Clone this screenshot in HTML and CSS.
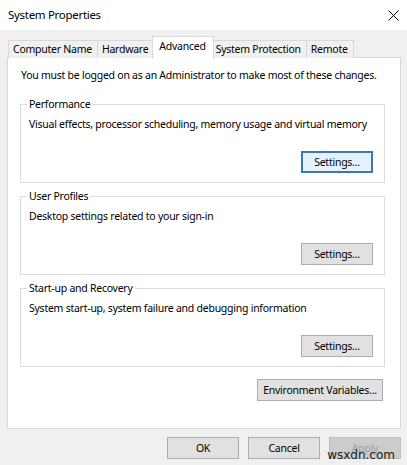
FILE: index.html
```html
<!DOCTYPE html>
<html lang="en">
<head>
<meta charset="utf-8">
<title>System Properties</title>
<link rel="stylesheet" href="styles.css">
</head>
<body>
<div class="window">
  <header class="titlebar">
    <span class="title">System Properties</span>
    <span class="close" aria-label="Close">
      <svg width="11" height="11" viewBox="0 0 11 11"><path d="M0.5 0.5 L10.5 10.5 M10.5 0.5 L0.5 10.5" stroke="#000" stroke-width="1" fill="none"/></svg>
    </span>
  </header>
  <nav class="tabs">
    <div class="tab">Computer Name</div>
    <div class="tab">Hardware</div>
    <div class="tab active">Advanced</div>
    <div class="tab">System Protection</div>
    <div class="tab">Remote</div>
  </nav>
  <section class="panel">
    <p class="notice">You must be logged on as an Administrator to make most of these changes.</p>
    <fieldset class="group">
      <legend>Performance</legend>
      <p class="desc">Visual effects, processor scheduling, memory usage and virtual memory</p>
      <div class="actions"><button class="btn focused">Settings...</button></div>
    </fieldset>
    <fieldset class="group">
      <legend>User Profiles</legend>
      <p class="desc">Desktop settings related to your sign-in</p>
      <div class="actions"><button class="btn">Settings...</button></div>
    </fieldset>
    <fieldset class="group">
      <legend>Start-up and Recovery</legend>
      <p class="desc">System start-up, system failure and debugging information</p>
      <div class="actions"><button class="btn">Settings...</button></div>
    </fieldset>
    <div class="env-row"><button class="btn wide">Environment Variables...</button></div>
  </section>
  <footer class="dialog-buttons">
    <button class="btn">OK</button>
    <button class="btn">Cancel</button>
    <button class="btn disabled">Apply</button>
  </footer>
  <span class="watermark">wsxdn.com</span>
</div>
</body>
</html>
```
FILE: styles.css
```css
* { box-sizing: border-box; }
html, body { margin: 0; padding: 0; }
body {
  width: 407px;
  height: 465px;
  overflow: hidden;
  background: #f0f0f0;
  font-family: "Noto Sans", "Open Sans", sans-serif;
  font-size: 10.5px;
  letter-spacing: -0.25px;
  color: #000;
}
.window { position: relative; width: 407px; height: 465px; }
.titlebar {
  height: 30px;
  background: #fff;
  display: flex;
  align-items: center;
  justify-content: space-between;
  padding: 0 8px 0 8px;
}
.title { font-size: 11.5px; letter-spacing: -0.3px; line-height: 16px; }
.close { display: flex; width: 11px; height: 11px; }
.tabs {
  display: flex;
  align-items: flex-end;
  height: 28px;
  padding-left: 8px;
}
.tab {
  height: 18px;
  padding: 0 5px 0 4px;
  display: flex;
  align-items: center;
  border: 1px solid #d9d9d9;
  border-bottom: none;
  background: #f0f0f0;
  line-height: 15px;
  white-space: nowrap;
}
.tab + .tab { margin-left: -1px; }
.tab.active {
  position: relative;
  z-index: 1;
  height: 23px;
  margin: 0 -2px -1px -2px;
  padding: 0 7px 3px 6px;
  background: #fff;
}
.panel {
  margin: -1px 6px 0 7px;
  border: 1px solid #d9d9d9;
  background: #fff;
  padding: 10px 15px 27px 12px;
}
.notice { margin: 0 0 0 1px; line-height: 15px; white-space: nowrap; }
.group {
  margin: 14px 0 0 0;
  padding: 5px 11px 9px 8px;
  border: 1px solid #dcdcdc;
  min-width: 0;
}
.group + .group { margin-top: 6px; }
.group legend {
  padding: 0 2px;
  margin-left: -2px;
  line-height: 15px;
}
.desc { margin: 0; line-height: 15px; white-space: nowrap; }
.actions { display: flex; justify-content: flex-end; margin-top: 19px; }
.btn {
  font: inherit;
  letter-spacing: inherit;
  color: #000;
  height: 22px;
  width: 72px;
  padding: 0;
  border: 1px solid #adadad;
  background: #e1e1e1;
  line-height: 18px;
  white-space: nowrap;
}
.btn.focused {
  border: 2px solid #3b79b0;
  background: #e5f1fb;
}
.btn.wide { width: 126px; }
.btn.disabled {
  color: #a0a0a0;
  background: #cccccc;
  border-color: #bfbfbf;
}
.env-row { display: flex; justify-content: flex-end; margin-top: 12px; padding-right: 2px; }
.dialog-buttons {
  display: flex;
  justify-content: flex-end;
  gap: 9px;
  padding: 8px 6px 0 0;
}
.watermark {
  position: absolute;
  right: 12px;
  bottom: 3px;
  font-family: "DejaVu Sans", sans-serif;
  font-size: 12px;
  letter-spacing: 0;
  color: #1a1a1a;
  line-height: 14px;
}
```
